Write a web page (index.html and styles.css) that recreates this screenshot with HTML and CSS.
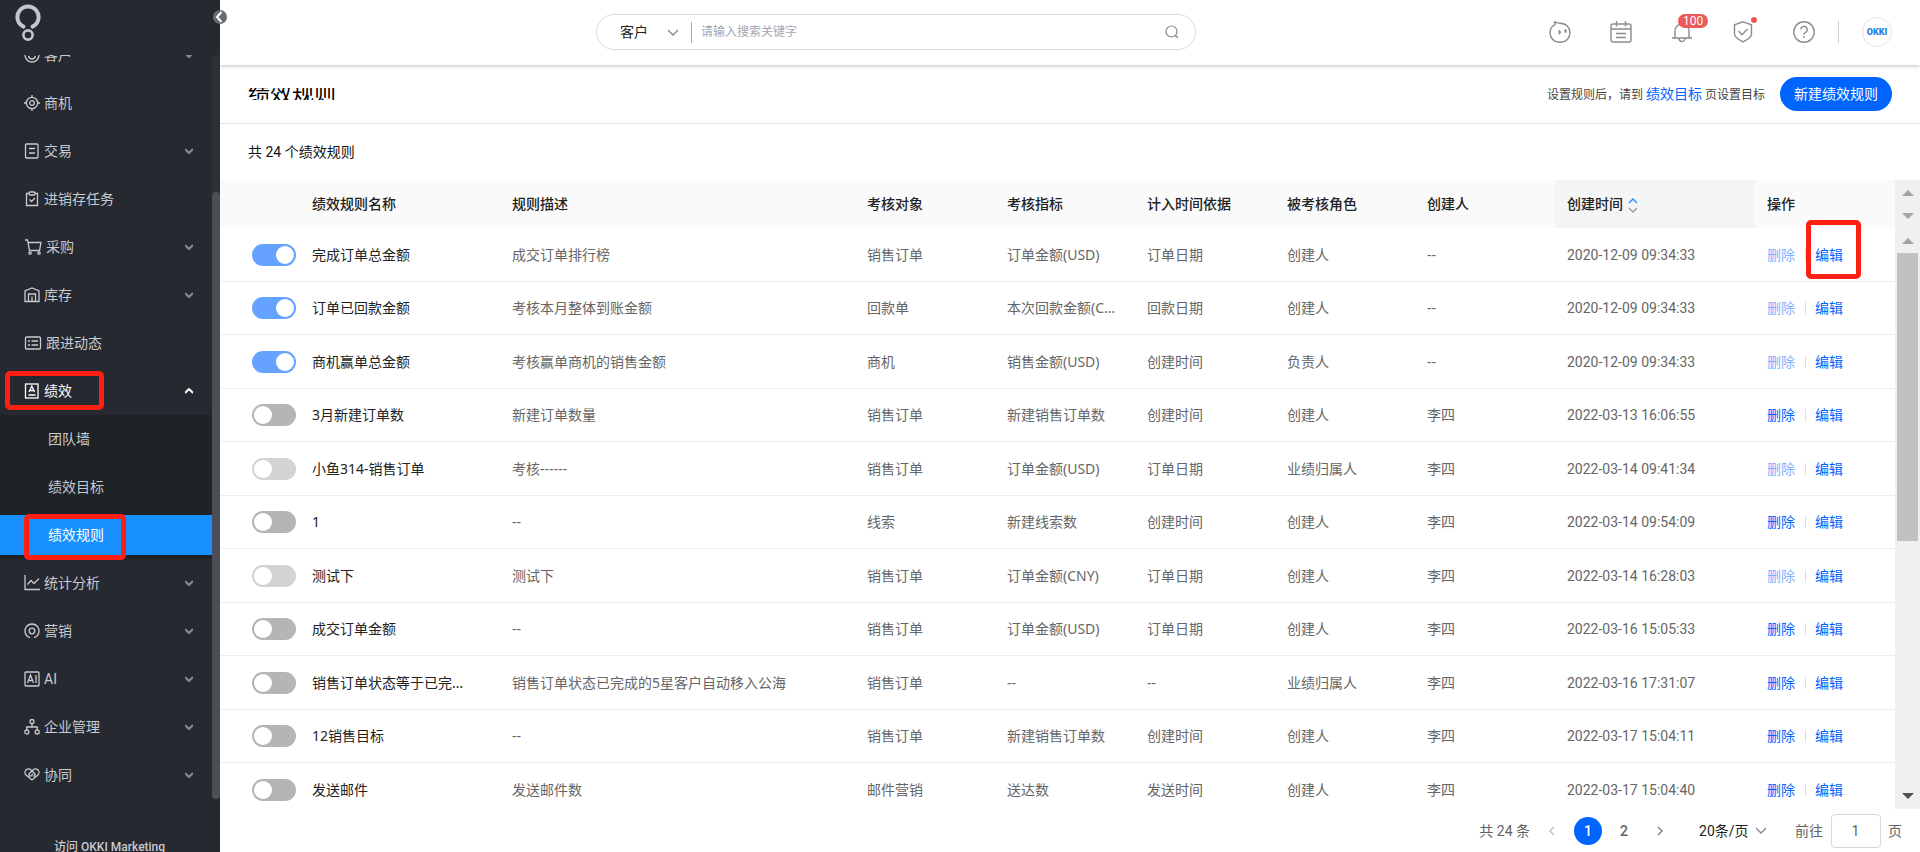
FILE: index.html
```
<!DOCTYPE html>
<html lang="zh-CN">
<head>
    <meta charset="UTF-8">
    <meta name="viewport" content="width=device-width, initial-scale=1.0">
    <title>绩效规则</title>
    <link rel="stylesheet" href="styles.css">
</head>
<body>
    <aside class="sidebar">
        <div class="logo">
            <svg width="26" height="38" viewBox="0 0 26 38" fill="none" stroke="#c3c6cc">
                <path d="M8.4 22.6A10.6 10.6 0 1 1 17.6 22.6" stroke-width="4" stroke-linecap="round"/>
                <circle cx="13" cy="31" r="4.6" stroke-width="2.6"/>
            </svg>
        </div>
        <button class="collapse" aria-label="收起">
            <svg width="14" height="14" viewBox="0 0 14 14" fill="none" stroke="#fff" stroke-width="2"><path d="M8.5 2L4 7l4.500 5"/></svg>
        </button>
        <nav class="menu">
            <ul class="menu-list">
                <li><a class="item" href="#"><svg class="icon" viewBox="0 0 16 16"><circle cx="8" cy="8" r="7"/><path d="M3 7c2 0 3-1 4-2M9 5c1 1 2 2 4 2M4.500 9c1 4 6 4 7 0"/></svg><span>客户</span><svg class="arrow" viewBox="0 0 8 6"><path d="M0 1l4 4 4-4"/></svg></a></li>
                <li><a class="item" href="#"><svg class="icon" viewBox="0 0 16 16"><circle cx="8" cy="8" r="5.700"/><circle cx="8" cy="8" r="2.300"/><path d="M8 0v3M8 13v3M0 8h3M13 8h3"/></svg><span>商机</span></a></li>
                <li><a class="item" href="#"><svg class="icon" viewBox="0 0 16 16"><rect x="1.500" y="1" width="12.500" height="14" rx="1"/><path d="M5 5.500h6M5 10h6"/></svg><span>交易</span><svg class="arrow" viewBox="0 0 8 6"><path d="M0 1l4 4 4-4"/></svg></a></li>
                <li><a class="item" href="#"><svg class="icon" viewBox="0 0 16 16"><path d="M5 2.500H2.500v12h11v-12H11"/><rect x="5" y="1" width="6" height="3" rx="1"/><path d="M5.500 8.500l2 2 3.500-3.500"/></svg><span>进销存任务</span></a></li>
                <li><a class="item" href="#"><svg class="icon icon-wide" viewBox="0 0 18 16"><path d="M1 1h2.500l2 10.500h10L17 3.500H4"/><circle cx="6" cy="14" r="1.200"/><circle cx="15" cy="14" r="1.200"/></svg><span>采购</span><svg class="arrow" viewBox="0 0 8 6"><path d="M0 1l4 4 4-4"/></svg></a></li>
                <li><a class="item" href="#"><svg class="icon" viewBox="0 0 16 16"><path d="M1 14.500V4l7-3 7 3v10.500z"/><path d="M4.500 14V7h7v7M8 9.500V14"/></svg><span>库存</span><svg class="arrow" viewBox="0 0 8 6"><path d="M0 1l4 4 4-4"/></svg></a></li>
                <li><a class="item" href="#"><svg class="icon icon-wide" viewBox="0 0 18 16"><rect x="1.500" y="2" width="15" height="12" rx="1"/><path d="M4 6h2M7.500 6H14M4 10h2M7.500 10H14"/></svg><span>跟进动态</span></a></li>
                <li>
                    <a class="item open" href="#"><svg class="icon" viewBox="0 0 16 16"><rect x="1.500" y="1" width="12.500" height="14"/><path d="M5 9l2.800-6 2.800 6M6 7.500h3.600M4.500 12h7"/></svg><span>绩效</span><svg class="arrow" viewBox="0 0 8 6"><path d="M0 5l4-4 4 4"/></svg></a>
                    <ul class="submenu">
                        <li><a href="#">团队墙</a></li>
                        <li><a href="#">绩效目标</a></li>
                        <li><a class="active" href="#">绩效规则</a></li>
                    </ul>
                </li>
                <li><a class="item" href="#"><svg class="icon" viewBox="0 0 16 16"><path d="M1 0v14.500h15M3.500 9.500L7 5.500l3 3 5-5"/></svg><span>统计分析</span><svg class="arrow" viewBox="0 0 8 6"><path d="M0 1l4 4 4-4"/></svg></a></li>
                <li><a class="item" href="#"><svg class="icon" viewBox="0 0 16 16"><path d="M6 14.700A7 7 0 1 1 10 14.700"/><circle cx="8" cy="8" r="2.800"/></svg><span>营销</span><svg class="arrow" viewBox="0 0 8 6"><path d="M0 1l4 4 4-4"/></svg></a></li>
                <li><a class="item" href="#"><svg class="icon" viewBox="0 0 16 16"><rect x="1" y="1" width="14" height="14" rx="1"/><path d="M3.500 12L6.500 4l3 8M4.500 9.500h4M12 4v8"/></svg><span>AI</span><svg class="arrow" viewBox="0 0 8 6"><path d="M0 1l4 4 4-4"/></svg></a></li>
                <li><a class="item" href="#"><svg class="icon" viewBox="0 0 16 16"><circle cx="8" cy="2.500" r="2"/><circle cx="2.800" cy="13" r="2"/><circle cx="13.200" cy="13" r="2"/><path d="M8 4.500V8M2.800 11V8h10.400v3"/></svg><span>企业管理</span><svg class="arrow" viewBox="0 0 8 6"><path d="M0 1l4 4 4-4"/></svg></a></li>
                <li><a class="item" href="#"><svg class="icon" viewBox="0 0 16 16"><path d="M8 13L2 8a3.500 3.500 0 0 1 5-5l4 4a1.500 1.500 0 0 1-2 2M8 13l6-5a3.500 3.500 0 0 0-5-5L5 7a1.500 1.500 0 0 0 2 2l2-2"/></svg><span>协同</span><svg class="arrow" viewBox="0 0 8 6"><path d="M0 1l4 4 4-4"/></svg></a></li>
            </ul>
            <div class="menu-track"><div class="menu-thumb"></div></div>
        </nav>
        <a class="visit" href="#">访问 OKKI Marketing</a>
        <div class="mark mark-menu"></div>
        <div class="mark mark-submenu"></div>
    </aside>

    <main class="main">
        <header class="topbar">
            <form class="search">
                <select class="search-type" aria-label="搜索类型"><option>客户</option></select>
                <svg class="chevron" viewBox="0 0 10 7"><path d="M0 1l5 5 5-5"/></svg>
                <input class="search-input" type="text" placeholder="请输入搜索关键字" aria-label="搜索">
                <button class="search-btn" type="button" aria-label="搜索"><svg width="14" height="14" viewBox="0 0 14 14" fill="none" stroke="#888" stroke-width="1.200"><circle cx="6.500" cy="6.500" r="5.500"/><path d="M10 10l3 3"/></svg></button>
            </form>
            <div class="tools">
                <button class="tool" aria-label="助手"><svg viewBox="0 0 22 22"><path d="M6 3.200C6.200 2 5.800 1.200 5 .5c2 1.200 3.500 1.500 6 1.700"/><path d="M11 2.200c6 0 10 4.200 10 9.500s-4 9.500-10 9.500S1 17 1 11.700c0-3.500 2-6.700 5.500-8.500"/><path d="M10 9.500c1 1 1 2.500 0 3.500M16 8.500c1 1 1 2 0 3" stroke-width="2"/></svg></button>
                <button class="tool" aria-label="日程"><svg viewBox="0 0 22 22"><rect x="1" y="3" width="20" height="18" rx="2"/><path d="M1 8h20M6.500 0v5.500M15.500 0v5.500M6 12.500h10M6 16.500h10"/></svg></button>
                <button class="tool" aria-label="通知"><svg viewBox="0 0 22 22"><path d="M1 17h20M4 17V10a7 7 0 0 1 14 0v7M8 17.500a3 3 0 0 0 6 0"/></svg><span class="badge">100</span></button>
                <button class="tool" aria-label="安全"><svg viewBox="0 0 22 22"><path d="M11 .8l8.500 3v9c0 4-5 6.500-8.500 8-3.500-1.500-8.500-4-8.500-8v-9zM6.500 10l3.500 3.800L15.500 8"/></svg><span class="dot"></span></button>
                <button class="tool" aria-label="帮助"><svg viewBox="0 0 22 22"><circle cx="11" cy="11" r="10.200"/><path d="M7.800 8.500a3.200 3.200 0 1 1 4.700 2.800c-1 .6-1.500 1-1.500 2.400M11 15v2"/></svg></button>
                <span class="split"></span>
                <button class="avatar">OKKI</button>
            </div>
        </header>

        <div class="titlebar">
            <h1>绩效规则</h1>
            <p class="tip">设置规则后，请到 <a href="#">绩效目标</a> 页设置目标</p>
            <button class="create">新建绩效规则</button>
        </div>
        <p class="count">共 24 个绩效规则</p>

        <section class="table-area">
            <table class="rules">
                <thead>
                    <tr>
                        <th class="col-switch"></th>
                        <th class="col-lg">绩效规则名称</th>
                        <th>规则描述</th>
                        <th class="col-md">考核对象</th>
                        <th class="col-md">考核指标</th>
                        <th class="col-md">计入时间依据</th>
                        <th class="col-md">被考核角色</th>
                        <th class="col-md">创建人</th>
                        <th class="col-lg sorted">创建时间<svg class="sort" viewBox="0 0 10 16"><path d="M1 6l4-4 4 4" stroke="#1890ff"/><path d="M1 11l4 4 4-4" stroke="#999"/></svg></th>
                        <th class="col-md">操作</th>
                    </tr>
                </thead>
                <tbody id="ruleRows"></tbody>
            </table>
            <div class="scroll">
                <i class="up"></i><i class="down"></i><i class="up"></i>
                <div class="thumb"></div>
                <i class="down end"></i>
            </div>
            <div class="mark mark-edit"></div>
        </section>

        <footer class="pager">
            <span class="total">共 24 条</span>
            <button class="page-btn prev" aria-label="上一页"><svg viewBox="0 0 6 10"><path d="M5 1L1 5l4 4"/></svg></button>
            <button class="page-btn current">1</button>
            <button class="page-btn">2</button>
            <button class="page-btn" aria-label="下一页"><svg viewBox="0 0 6 10"><path d="M1 1l4 4-4 4"/></svg></button>
            <select class="page-size" aria-label="每页条数"><option>20条/页</option></select>
            <svg class="chevron" viewBox="0 0 10 7"><path d="M0 1l5 5 5-5"/></svg>
            <label class="goto">前往 <input type="text" value="1"> 页</label>
        </footer>
    </main>

    <script>
        // name, description, object, metric, date basis, role, creator, created, switch on, deletable
        const rules = [
            ['完成订单总金额', '成交订单排行榜', '销售订单', '订单金额(USD)', '订单日期', '创建人', '--', '2020-12-09 09:34:33', true, false],
            ['订单已回款金额', '考核本月整体到账金额', '回款单', '本次回款金额(CNY)', '回款日期', '创建人', '--', '2020-12-09 09:34:33', true, false],
            ['商机赢单总金额', '考核赢单商机的销售金额', '商机', '销售金额(USD)', '创建时间', '负责人', '--', '2020-12-09 09:34:33', true, false],
            ['3月新建订单数', '新建订单数量', '销售订单', '新建销售订单数', '创建时间', '创建人', '李四', '2022-03-13 16:06:55', false, true],
            ['小鱼314-销售订单', '考核------', '销售订单', '订单金额(USD)', '订单日期', '业绩归属人', '李四', '2022-03-14 09:41:34', false, false],
            ['1', '--', '线索', '新建线索数', '创建时间', '创建人', '李四', '2022-03-14 09:54:09', false, true],
            ['测试下', '测试下', '销售订单', '订单金额(CNY)', '订单日期', '创建人', '李四', '2022-03-14 16:28:03', false, false],
            ['成交订单金额', '--', '销售订单', '订单金额(USD)', '订单日期', '创建人', '李四', '2022-03-16 15:05:33', false, true],
            ['销售订单状态等于已完成的订单', '销售订单状态已完成的5星客户自动移入公海', '销售订单', '--', '--', '业绩归属人', '李四', '2022-03-16 17:31:07', false, true],
            ['12销售目标', '--', '销售订单', '新建销售订单数', '创建时间', '创建人', '李四', '2022-03-17 15:04:11', false, true],
            ['发送邮件', '发送邮件数', '邮件营销', '送达数', '发送时间', '创建人', '李四', '2022-03-17 15:04:40', false, true]
        ];

        document.getElementById('ruleRows').innerHTML = rules.map(rule => {
            const [on, deletable] = rule.slice(8);
            const cells = rule.slice(0, 8).map(text => `<td>${text}</td>`).join('');
            return `<tr>
                <td><input class="switch ${deletable || on ? '' : 'locked'}" type="checkbox" aria-label="${rule[0]}" ${on ? 'checked' : ''}></td>
                ${cells}
                <td class="actions"><a class="${deletable ? '' : 'off'}" href="#">删除</a><a class="edit" href="#">编辑</a></td>
            </tr>`;
        }).join('');
    </script>
</body>
</html>
```
FILE: styles.css
```
* {
    box-sizing: border-box;
}
body {
    margin: 0;
    display: flex;
    height: 100vh;
    overflow: hidden;
    background: #fff;
    color: #222;
    font-family: Roboto, "Noto Sans CJK SC", sans-serif;
    font-size: 14px;
    line-height: 20px;
}
a {
    color: #0064ff;
    text-decoration: none;
}
ul,
h1,
p {
    margin: 0;
    padding: 0;
    list-style: none;
}
button,
input,
select {
    font: inherit;
    color: inherit;
    background: none;
    border: none;
    padding: 0;
    margin: 0;
    outline: none;
}
select {
    appearance: none;
}
svg {
    display: block;
    flex: none;
}

/* sidebar */
.sidebar {
    position: relative;
    z-index: 3;
    flex: none;
    width: 220px;
    display: flex;
    flex-direction: column;
    background: #262930;
}
.logo {
    flex: none;
    height: 55px;
    padding: 4px 15px;
}
.collapse {
    position: absolute;
    top: 10px;
    right: -7px;
    border-radius: 50%;
    background: #686c72;
}
.menu {
    flex: 1;
    min-height: 0;
    display: flex;
    overflow: hidden;
}
.menu-list {
    flex: 1;
    margin-top: -24px;
}
.item {
    display: flex;
    align-items: center;
    height: 48px;
    padding: 0 19px 0 24px;
    color: #c8cacf;
}
.item.open {
    color: #fff;
}
.icon {
    width: 16px;
    height: 16px;
    margin-right: 4px;
    fill: none;
    stroke: currentColor;
    stroke-width: 1.3;
}
.icon-wide {
    width: 18px;
}
.arrow {
    width: 8px;
    height: 6px;
    margin-left: auto;
    fill: none;
    stroke: #8a8c91;
    stroke-width: 2;
}
.open .arrow {
    stroke: #fff;
}
.submenu {
    display: flex;
    flex-direction: column;
    gap: 8px;
    padding: 4px 0;
    background: #1f2226;
}
.submenu a {
    display: block;
    padding-left: 48px;
    line-height: 40px;
    color: #c8cacf;
}
.submenu .active {
    background: #1890ff;
    color: #fff;
}
.menu-track {
    width: 8px;
    padding-top: 137px;
    background: #2d3037;
}
.menu-thumb {
    height: 607px;
    border-radius: 4px;
    background: #4c4e57;
}
.visit {
    flex: none;
    height: 36px;
    margin-top: 17px;
    padding: 21px 0 0 54px;
    overflow: hidden;
    background: #262930;
    color: #c8cacf;
    font-size: 12px;
    font-weight: 500;
}
.menu,
.visit {
    white-space: nowrap;
}

/* highlight frames over the page */
.mark {
    position: absolute;
    border: 5px solid #ff1f12;
    border-radius: 5px;
    pointer-events: none;
}
.mark-menu {
    top: 371px;
    left: 5px;
    width: 99px;
    height: 39px;
}
.mark-submenu {
    top: 514px;
    left: 24px;
    width: 102px;
    height: 46px;
}
.mark-edit {
    top: 40px;
    right: 59px;
    width: 55px;
    height: 59px;
}

/* top bar */
.main {
    flex: 1;
    min-width: 0;
    display: flex;
    flex-direction: column;
}
.topbar {
    position: relative;
    z-index: 2;
    flex: none;
    display: flex;
    justify-content: space-between;
    height: 65px;
    padding: 14px 28px 0 376px;
    background: #fff;
    box-shadow: 0 1px 4px rgba(0, 0, 0, 0.25);
}
.search {
    display: flex;
    align-items: center;
    width: 600px;
    height: 36px;
    padding: 0 16px 0 23px;
    border: 1px solid #d9d9d9;
    border-radius: 18px;
}
.search-type {
    width: 48px;
}
.chevron {
    width: 10px;
    height: 7px;
    fill: none;
    stroke: #888;
    stroke-width: 1.3;
}
.search-input {
    flex: 1;
    height: 21px;
    margin-left: 13px;
    padding-left: 9px;
    border-left: 1px solid #aaa;
    font-size: 12px;
}
.search-input::placeholder {
    color: #a3a7b3;
}
.tools {
    display: flex;
    align-items: center;
    gap: 39px;
    height: 36px;
}
.tool {
    position: relative;
    width: 22px;
    height: 22px;
}
.tool svg {
    width: 22px;
    height: 22px;
    fill: none;
    stroke: #8c8c8c;
    stroke-width: 1.4;
}
.badge {
    position: absolute;
    top: -7px;
    left: 7px;
    padding: 0 5px;
    border-radius: 7px;
    background: #eb5a58;
    color: #fff;
    font-size: 12px;
    line-height: 14px;
}
.dot {
    position: absolute;
    top: -4px;
    right: -3px;
    width: 6px;
    height: 6px;
    border-radius: 50%;
    background: #eb5a58;
}
.split {
    width: 1px;
    height: 22px;
    margin: 0 -16px;
    background: #d0d0d0;
}
.avatar {
    width: 30px;
    height: 30px;
    border: 1px solid #e3e3e3;
    border-radius: 50%;
    color: #2b7de0;
    font-size: 9px;
    font-weight: 900;
    line-height: 28px;
}

/* title and count */
.titlebar {
    flex: none;
    display: flex;
    align-items: center;
    height: 59px;
    padding: 0 28px;
    border-bottom: 1px solid #e2e2e2;
}
h1 {
    height: 12px;
    margin-right: auto;
    overflow: hidden;
    font-size: 22px;
    font-weight: 400;
    line-height: 12px;
    color: #000;
}
.tip {
    margin-right: 15px;
    font-size: 12px;
    color: #444;
}
.tip a {
    font-size: 14px;
}
.create {
    height: 34px;
    padding: 0 14px;
    border-radius: 17px;
    background: #0064ff;
    color: #fff;
}
.count {
    flex: none;
    height: 56px;
    padding: 18px 28px;
    color: #111;
}

/* table */
.table-area {
    position: relative;
    flex: 1;
    min-height: 0;
    display: flex;
    align-items: flex-start;
    overflow: hidden;
}
.rules {
    flex: 1;
    width: 100%;
    min-width: 0;
    table-layout: fixed;
    border-collapse: separate;
    border-spacing: 0;
}
th,
td {
    padding: 0 12px;
    overflow: hidden;
    text-align: left;
    text-overflow: ellipsis;
    white-space: nowrap;
}
th {
    height: 48px;
    background: #fafafa;
    font-weight: 500;
}
td {
    height: 53px;
    border-bottom: 1px solid #ebedf3;
    color: #666;
    font-family: "Noto Sans", "Noto Sans CJK SC", sans-serif;
}
tr:nth-child(odd) td {
    height: 54px;
}
td:first-child,
th:first-child {
    padding: 0 4px 0 32px;
}
td:nth-child(2) {
    padding-right: 24px;
    color: #222;
}
td:nth-child(9) {
    font-family: Roboto, sans-serif;
}
.col-switch {
    width: 80px;
}
.col-md {
    width: 140px;
}
.col-lg {
    width: 200px;
}
.sorted {
    background: #f5f5f5;
}
.sort {
    display: inline-block;
    width: 10px;
    height: 16px;
    margin-left: 5px;
    vertical-align: middle;
    fill: none;
    stroke-width: 1.3;
}
.switch {
    appearance: none;
    display: block;
    width: 44px;
    height: 22px;
    padding: 2px;
    border-radius: 11px;
    background: #b5b5b5;
}
.switch::before {
    content: "";
    display: block;
    width: 18px;
    height: 18px;
    border-radius: 50%;
    background: #fff;
}
.switch.locked {
    background: #d3d3d3;
}
.switch:checked {
    background: #66a2ff;
}
.switch:checked::before {
    margin-left: auto;
}
.actions .off {
    color: #7fb0ff;
}
.edit {
    margin-left: 10px;
    padding-left: 10px;
    background: linear-gradient(#ddd, #ddd) 0 4px / 1px 12px no-repeat;
}
.scroll {
    align-self: stretch;
    flex: none;
    display: flex;
    flex-direction: column;
    align-items: center;
    width: 25px;
    padding: 10px 0;
    background: #f0f0f0;
}
.scroll i {
    flex: none;
    border: 6px solid transparent;
}
.scroll .up {
    border-top: 0;
    border-bottom-color: #a3a3a3;
}
.scroll .down {
    margin: 17px 0 19px;
    border-bottom: 0;
    border-top-color: #a3a3a3;
}
.thumb {
    width: 21px;
    height: 288px;
    margin-top: 9px;
    background: #c1c1c1;
}
.scroll .end {
    margin: auto 0 0;
    border-top-color: #505050;
}

/* pager */
.pager {
    flex: none;
    display: flex;
    align-items: center;
    justify-content: flex-end;
    height: 43px;
    padding-right: 18px;
    color: #606266;
}
.page-btn {
    display: flex;
    align-items: center;
    justify-content: center;
    width: 28px;
    height: 28px;
    margin-left: 8px;
    border-radius: 50%;
    font-weight: 500;
}
.page-btn svg {
    width: 6px;
    height: 10px;
    fill: none;
    stroke: #777;
    stroke-width: 1.3;
}
.prev svg {
    stroke: #bbb;
}
.current {
    background: #0064ff;
    color: #fff;
}
.page-size {
    margin: 0 7px 0 25px;
    color: #222;
}
.goto {
    margin-left: 29px;
}
.goto input {
    width: 50px;
    height: 34px;
    margin: 0 4px;
    border: 1px solid #d4d7de;
    border-radius: 4px;
    text-align: center;
}
```
